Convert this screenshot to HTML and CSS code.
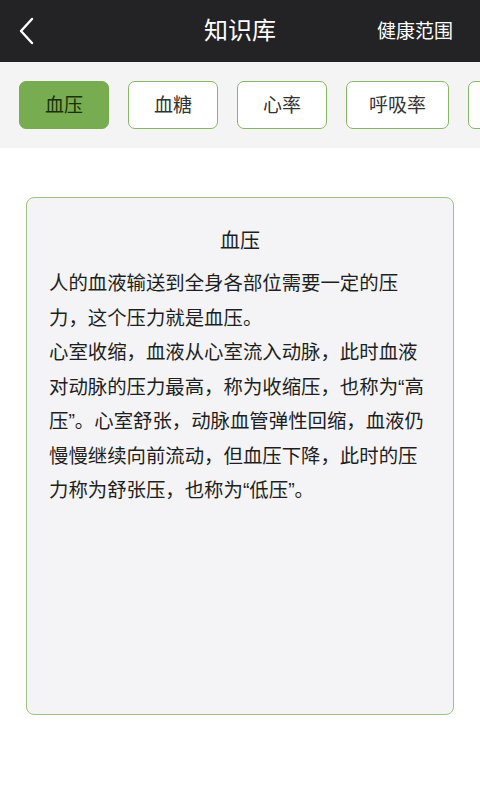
FILE: index.html
```html
<!DOCTYPE html>
<html lang="zh-CN">
  <head>
    <meta charset="UTF-8" />
    <meta name="viewport" content="width=device-width, initial-scale=1.0" />
    <title>知识库</title>
    <link rel="stylesheet" href="styles.css">
  </head>
  <body>
    <div class="container">
      <div class="header">
        <div class="back">
          <svg width="20" height="30" viewBox="0 0 20 30">
            <polyline points="14,3 3,15 14,27" fill="none" stroke="#fff" stroke-width="2.4" stroke-linecap="round" stroke-linejoin="round" />
          </svg>
        </div>
        <p class="title">知识库</p>
        <p class="range">健康范围</p>
      </div>

      <div class="tabs">
        <div class="tab active">血压</div>
        <div class="tab">血糖</div>
        <div class="tab">心率</div>
        <div class="tab">呼吸率</div>
        <div class="tab"></div>
      </div>

      <div class="content">
        <div class="card">
          <p class="card_title">血压</p>
          <p class="text">人的血液输送到全身各部位需要一定的压力，这个压力就是血压。</p>
          <p class="text">心室收缩，血液从心室流入动脉，此时血液对动脉的压力最高，称为收缩压，也称为“高压”。心室舒张，动脉血管弹性回缩，血液仍慢慢继续向前流动，但血压下降，此时的压力称为舒张压，也称为“低压”。</p>
        </div>
      </div>
    </div>
  </body>
</html>
```

FILE: styles.css
```css
html,
body,
div,
p {
  margin: 0;
  padding: 0;
}

html,
body {
  width: 100%;
  height: 100%;
}

body {
  font-family: "Liberation Sans", "Noto Sans CJK SC", sans-serif;
  background: #fff;
  line-height: 1;
}

.container {
  height: 100%;
  display: flex;
  flex-direction: column;
}

.header {
  height: 62px;
  background-color: #232325;
  display: flex;
  align-items: center;
  justify-content: space-between;
  padding: 0 27px 0 18px;
  position: relative;
}
.header .back {
  width: 20px;
  height: 30px;
  display: flex;
}
.header .title {
  position: absolute;
  left: 0;
  right: 0;
  text-align: center;
  color: #fff;
  font-size: 24px;
  pointer-events: none;
}
.header .range {
  color: #fff;
  font-size: 19px;
}

.tabs {
  height: 86px;
  background-color: #f4f4f4;
  display: flex;
  align-items: center;
  gap: 19px;
  padding-left: 19px;
  overflow: hidden;
}
.tab {
  flex: none;
  height: 48px;
  min-width: 90px;
  box-sizing: border-box;
  padding: 0 22px;
  display: flex;
  align-items: center;
  justify-content: center;
  border: 1.5px solid #86b664;
  border-radius: 7px;
  background: #fff;
  color: #333;
  font-size: 19px;
}
.tab.active {
  background: #77ad50;
  border-color: #77ad50;
  color: #183208;
}

.content {
  flex: 1;
  padding: 49px 26px 0;
}
.card {
  height: 518px;
  box-sizing: border-box;
  border: 1.5px solid #a0c27e;
  border-radius: 8px;
  background: #f4f4f6;
  padding: 33px 22px 0;
}
.card_title {
  text-align: center;
  color: #1e1e1e;
  font-size: 20px;
  margin-bottom: 15px;
}
.text {
  color: #1e1e1e;
  font-size: 19.4px;
  line-height: 34.5px;
  width: 384px;
}
```
